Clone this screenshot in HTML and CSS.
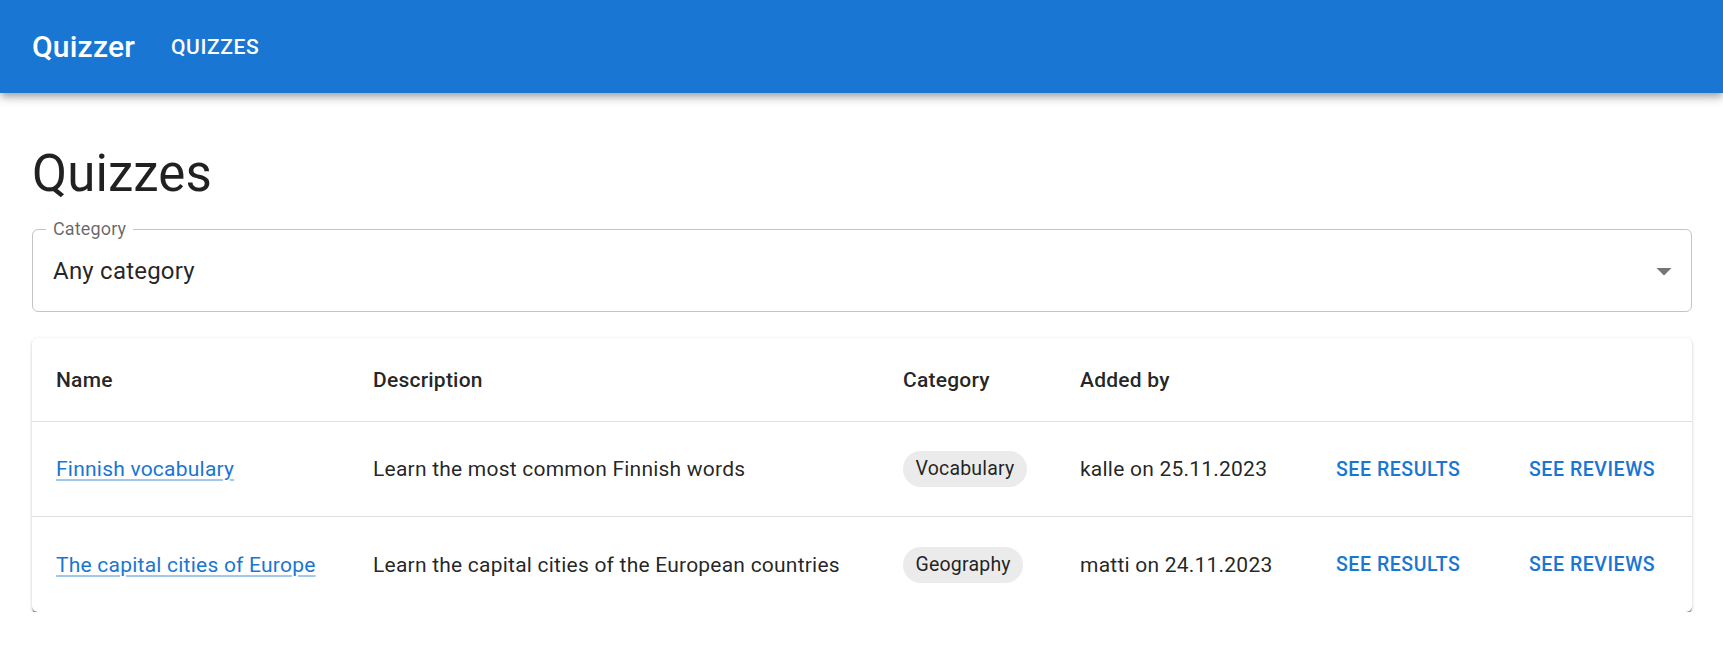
FILE: index.html
```html
<!DOCTYPE html>
<html lang="en">
<head>
<meta charset="utf-8">
<title>Quizzer</title>
<link rel="stylesheet" href="styles.css">
</head>
<body>
<header class="appbar">
  <div class="brand">Quizzer</div>
  <a class="nav-btn" href="#">QUIZZES</a>
</header>
<main class="page">
  <h1 class="title">Quizzes</h1>
  <div class="select">
    <span class="select-label">Category</span>
    <span class="select-value">Any category</span>
    <svg class="select-icon" viewBox="0 0 24 24" width="36" height="36"><path d="M7 10l5 5 5-5z"/></svg>
  </div>
  <div class="card">
    <table class="quiz-table">
      <colgroup>
        <col class="c-name"><col class="c-desc"><col class="c-cat"><col class="c-by"><col class="c-res"><col class="c-rev">
      </colgroup>
      <thead>
        <tr><th>Name</th><th>Description</th><th>Category</th><th>Added by</th><th></th><th></th></tr>
      </thead>
      <tbody>
        <tr>
          <td><a class="link" href="#">Finnish vocabulary</a></td>
          <td>Learn the most common Finnish words</td>
          <td><span class="chip">Vocabulary</span></td>
          <td>kalle on 25.11.2023</td>
          <td class="btn-cell"><a class="text-btn" href="#">See results</a></td>
          <td class="btn-cell"><a class="text-btn" href="#">See reviews</a></td>
        </tr>
        <tr>
          <td><a class="link" href="#">The capital cities of Europe</a></td>
          <td>Learn the capital cities of the European countries</td>
          <td><span class="chip">Geography</span></td>
          <td>matti on 24.11.2023</td>
          <td class="btn-cell"><a class="text-btn" href="#">See results</a></td>
          <td class="btn-cell"><a class="text-btn" href="#">See reviews</a></td>
        </tr>
      </tbody>
    </table>
  </div>
</main>
</body>
</html>
```
FILE: styles.css
```css
* { box-sizing: border-box; }
html, body { margin: 0; padding: 0; background: #fff; }
body {
  font-family: Roboto, "Liberation Sans", Arial, sans-serif;
  color: rgba(0,0,0,0.87);
}
.appbar {
  height: 93px;
  background: #1976d2;
  color: #fff;
  display: flex;
  align-items: center;
  padding: 0 32px;
  box-shadow: 0 3px 6px -1.5px rgba(0,0,0,0.2), 0 6px 7.5px 0 rgba(0,0,0,0.14), 0 1.5px 15px 0 rgba(0,0,0,0.12);
  position: relative;
  z-index: 1;
}
.brand {
  font-size: 30px;
  font-weight: 500;
  letter-spacing: 0.2px;
  margin-right: 24px;
}
.nav-btn {
  color: #fff;
  text-decoration: none;
  font-size: 21px;
  font-weight: 500;
  letter-spacing: 0.6px;
  padding: 9px 12px;
}
.page {
  padding: 0 31px 0 32px;
}
.title {
  margin: 49px 0 23px;
  font-size: 51px;
  font-weight: 400;
  line-height: 64px;
  letter-spacing: 0.1px;
}
.select {
  position: relative;
  height: 83px;
  border: 1px solid #c4c4c4;
  border-radius: 6px;
  display: flex;
  align-items: center;
  padding: 0 9px 0 20px;
}
.select-label {
  position: absolute;
  left: 13px;
  top: -13px;
  padding: 0 7px;
  background: #fff;
  font-size: 18px;
  line-height: 24px;
  letter-spacing: 0.15px;
  color: rgba(0,0,0,0.6);
}
.select-value {
  flex: 1;
  font-size: 24px;
  line-height: 36px;
  letter-spacing: 0.22px;
}
.select-icon {
  fill: rgba(0,0,0,0.54);
  margin-top: 1px;
}
.card {
  margin-top: 26px;
  border-radius: 6px;
  background: #fff;
  box-shadow: 0 3px 1.5px -1.5px rgba(0,0,0,0.4), 0 1.5px 1.5px 0 rgba(0,0,0,0.16), 0 1.5px 4.5px 0 rgba(0,0,0,0.12);
  overflow: hidden;
}
.quiz-table {
  width: 100%;
  table-layout: fixed;
  border-collapse: separate;
  border-spacing: 0;
}
.c-name { width: 317px; }
.c-desc { width: 530px; }
.c-cat { width: 177px; }
.c-by { width: 244px; }
.c-res { width: 193px; }
.c-rev { width: 199px; }
.quiz-table th, .quiz-table td {
  text-align: left;
  padding: 0 24px;
  vertical-align: middle;
  border-bottom: 1px solid #e0e0e0;
  font-size: 21px;
  letter-spacing: 0.225px;
  white-space: nowrap;
}
.quiz-table th {
  height: 84px;
  font-weight: 500;
  line-height: 36px;
}
.quiz-table td {
  height: 95px;
  font-weight: 400;
  line-height: 30px;
}
.quiz-table tbody tr:last-child td {
  border-bottom: none;
}
.link {
  color: #1976d2;
  text-decoration: underline;
  text-decoration-color: rgba(25,118,210,0.4);
  text-underline-offset: 3px;
}
.chip {
  display: inline-flex;
  align-items: center;
  height: 36px;
  padding: 0 12.5px;
  border-radius: 18px;
  background: #ebebeb;
  font-size: 19.5px;
  letter-spacing: 0.2px;
}
.quiz-table td.btn-cell {
  padding-left: 24px;
}
.text-btn {
  display: inline-block;
  padding: 6px 7.5px;
  margin-left: 4.5px;
  color: #1976d2;
  text-decoration: none;
  text-transform: uppercase;
  font-size: 19.5px;
  font-weight: 500;
  letter-spacing: 0.56px;
  line-height: 33px;
}
```
